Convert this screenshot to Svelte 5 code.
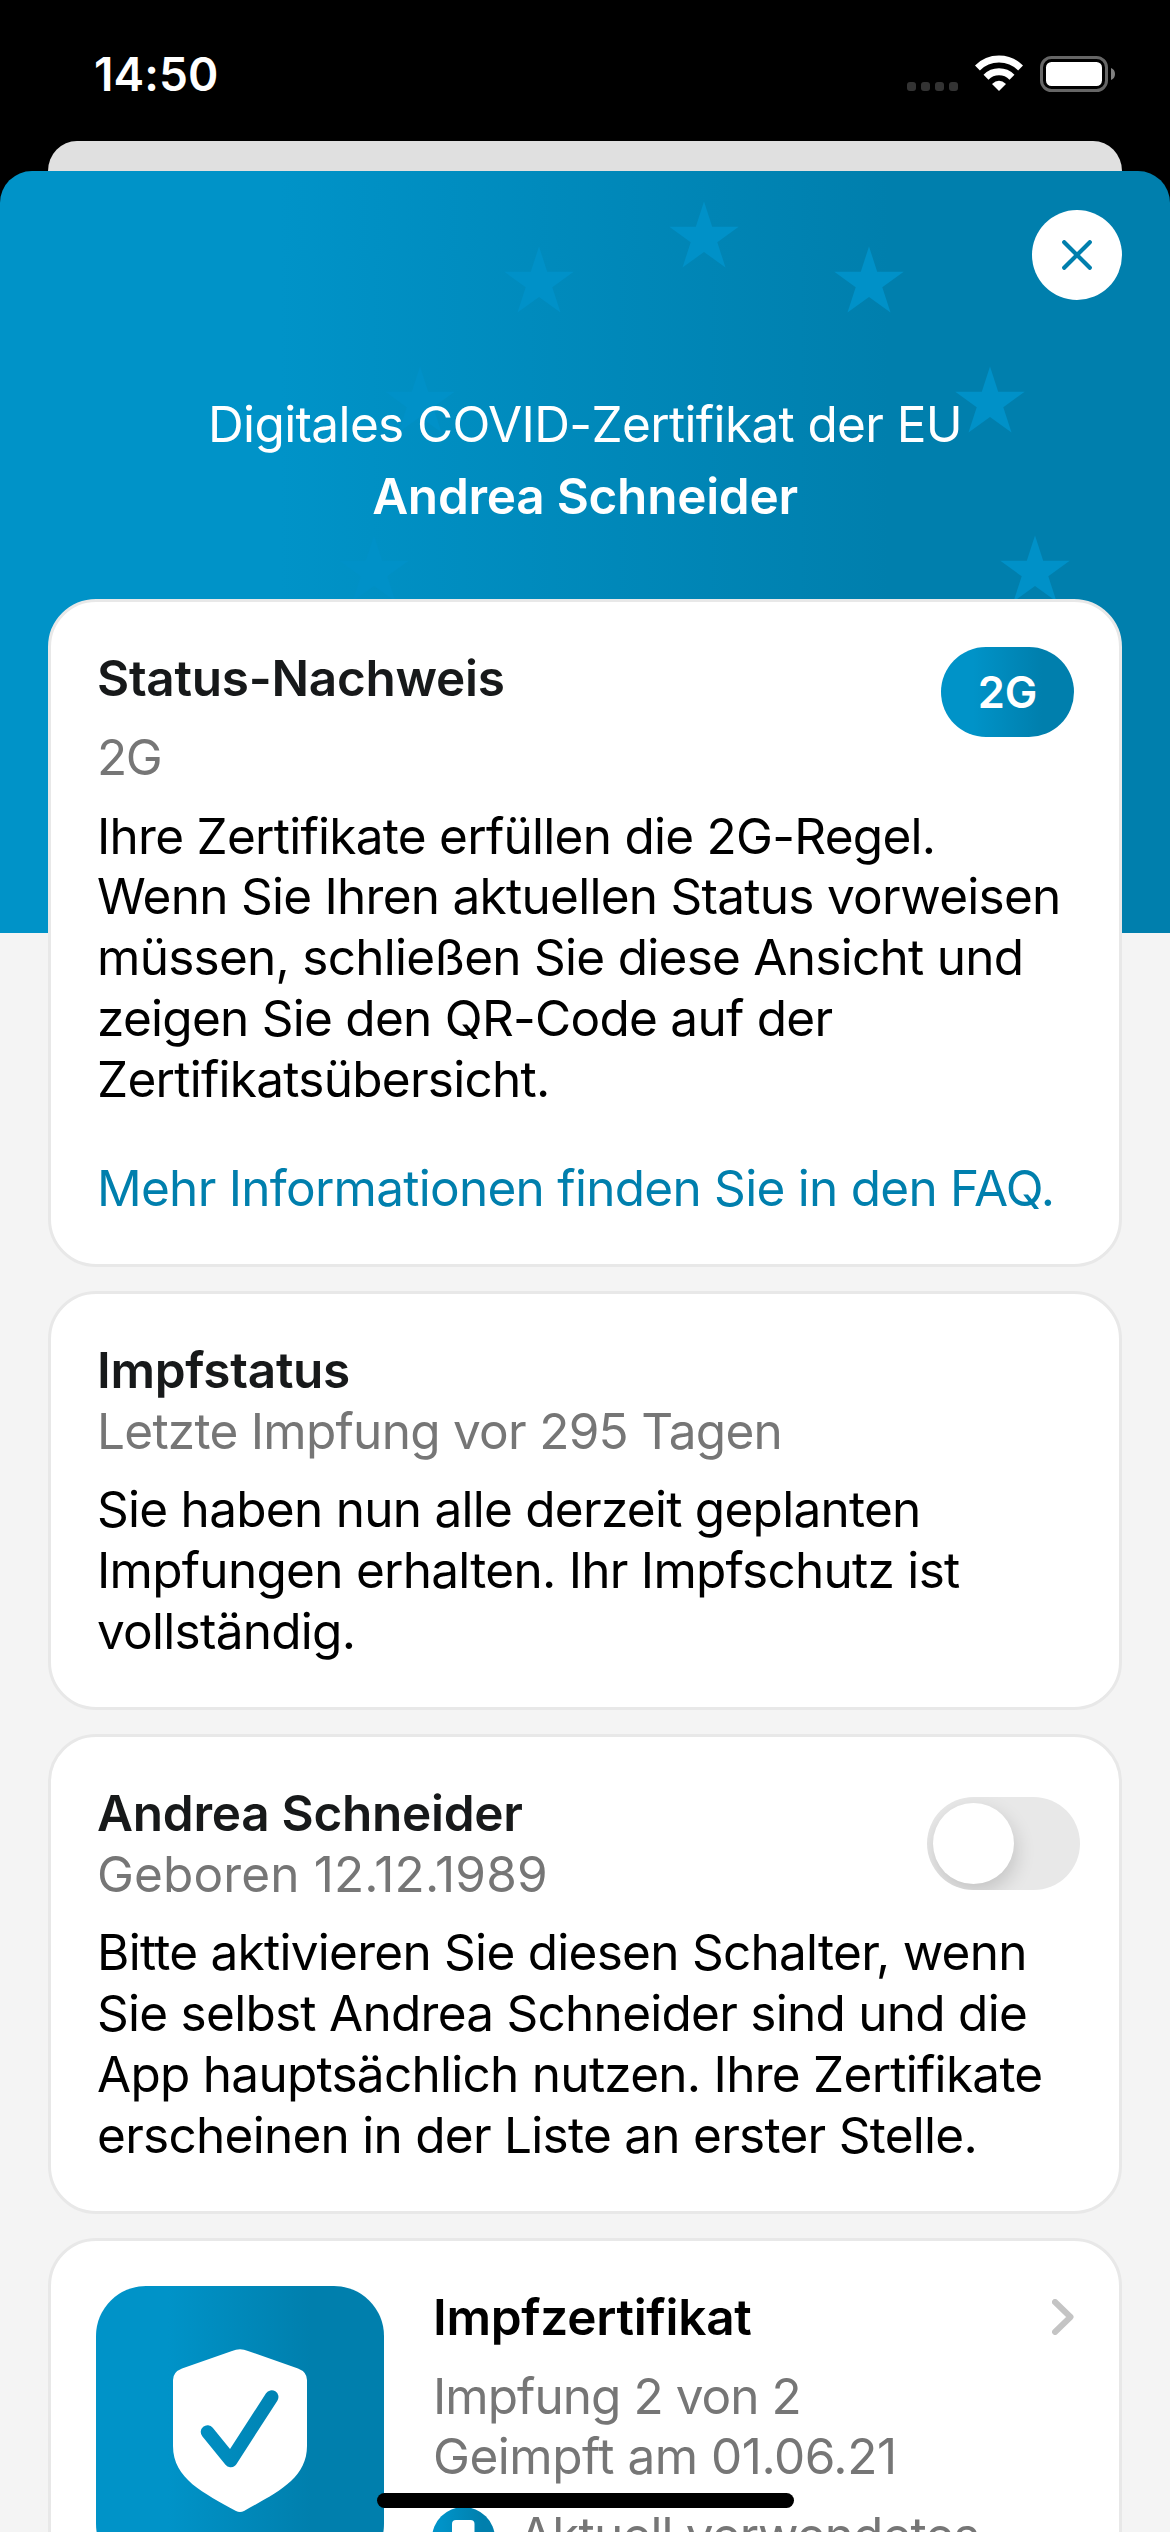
<script>
  // Corner points of a five-pointed star around a centre
  function star(cx, cy, r = 36.5, inner = 14) {
    return Array.from({ length: 10 }, (_, i) => {
      const a = (Math.PI * i) / 5 - Math.PI / 2;
      const d = i % 2 ? inner : r;
      return `${(cx + d * Math.cos(a)).toFixed(1)},${(cy + d * Math.sin(a)).toFixed(1)}`;
    }).join(' ');
  }

  const stars = [
    [704, 67], [539, 112], [869, 112], [420, 232], [990, 232], [374, 401], [1035, 401]
  ];

  const statusLines = [
    'Ihre Zertifikate erfüllen die 2G-Regel.',
    'Wenn Sie Ihren aktuellen Status vorweisen',
    'müssen, schließen Sie diese Ansicht und',
    'zeigen Sie den QR-Code auf der',
    'Zertifikatsübersicht.'
  ];
  const vaccineLines = [
    'Sie haben nun alle derzeit geplanten',
    'Impfungen erhalten. Ihr Impfschutz ist',
    'vollständig.'
  ];
  const personLines = [
    'Bitte aktivieren Sie diesen Schalter, wenn',
    'Sie selbst Andrea Schneider sind und die',
    'App hauptsächlich nutzen. Ihre Zertifikate',
    'erscheinen in der Liste an erster Stelle.'
  ];
</script>

<div class="screen">
  <header class="statusbar">
    <span class="time">14:50</span>
    <div class="indicators">
      <svg class="dots" width="51" height="9" viewBox="0 0 51 9">
        {#each [0, 14, 28, 42] as x}
          <rect {x} width="9" height="9" rx="3" fill="#333" />
        {/each}
      </svg>
      <svg class="wifi" width="48" height="36" viewBox="0 0 48 36">
        <g fill="none" stroke="#fff" stroke-width="7">
          <path d="M2.4 13A30.5 30.5 0 0 1 45.6 13" />
          <path d="M11 22.2A18.4 18.4 0 0 1 37 22.2" />
        </g>
        <path d="M24 36L17 29Q24 22.600 31 29Z" fill="#fff" />
      </svg>
      <svg class="battery" width="75" height="36" viewBox="0 0 75 36">
        <rect x="1.500" y="1.500" width="65" height="33" rx="10" fill="none" stroke="#666" stroke-width="3" />
        <rect x="6" y="6" width="56" height="24" rx="5.500" fill="#fff" />
        <path d="M71 12Q75 13.500 75 18Q75 22.500 71 24Z" fill="#808080" />
      </svg>
    </div>
  </header>

  <div class="behind"></div>

  <main class="sheet">
    <svg class="stars" width="1170" height="761" viewBox="0 0 1170 761">
      {#each stars as [x, y]}
        <polygon points={star(x, y)} fill="#0091c8" />
      {/each}
    </svg>
    <div class="hero">
      <button class="close" aria-label="Schließen">
        <svg width="30" height="30" viewBox="0 0 30 30" fill="none" stroke="#007fad" stroke-width="4.200" stroke-linecap="round">
          <path d="M2.200 2.200L27.800 27.800M27.800 2.200L2.200 27.800" />
        </svg>
      </button>
      <div class="title">Digitales COVID-Zertifikat der EU</div>
      <h1>Andrea Schneider</h1>
    </div>

    <div class="cards">
      <section class="card status">
        <div class="row">
          <h2>Status-Nachweis</h2>
          <span class="badge">2G</span>
        </div>
        <div class="sub">2G</div>
        <div class="body">
          {#each statusLines as line}<div>{line}</div>{/each}
        </div>
        <a class="faq" href="#faq">Mehr Informationen finden Sie in den FAQ.</a>
      </section>

      <section class="card vaccine">
        <h2>Impfstatus</h2>
        <div class="sub">Letzte Impfung vor 295 Tagen</div>
        <div class="body">
          {#each vaccineLines as line}<div>{line}</div>{/each}
        </div>
      </section>

      <section class="card person">
        <div class="row">
          <div>
            <h2>Andrea Schneider</h2>
            <div class="sub born">Geboren 12.12.1989</div>
          </div>
          <button class="switch" role="switch" aria-checked="false" aria-label="Hauptnutzer"><span class="knob"></span></button>
        </div>
        <div class="body">
          {#each personLines as line}<div>{line}</div>{/each}
        </div>
      </section>

      <section class="card cert">
        <div class="tile">
          <svg width="134" height="163" viewBox="0 0 134 163">
            <defs>
              <linearGradient id="check" gradientUnits="userSpaceOnUse" x1="-5" x2="139" y1="0" y2="0">
                <stop stop-color="#0093c8" /><stop offset="1" stop-color="#007fad" />
              </linearGradient>
            </defs>
            <path d="M59 2Q67 -1.500 75 2L125 19.500Q134 23 134 31V97C134 130 103 144 71 162Q67 164 63 162C31 144 0 130 0 97V31Q0 23 9 19.500Z" fill="#fff" />
            <path d="M34.500 83L57.700 111.500L98.700 48" fill="none" stroke="url(#check)" stroke-width="13.500" stroke-linecap="round" stroke-linejoin="round" />
          </svg>
        </div>
        <div class="details">
          <div class="row">
            <h2 class="dark">Impfzertifikat</h2>
            <svg class="chevron" width="22" height="36" viewBox="0 0 22 36" fill="none" stroke="#c4c4c4" stroke-width="6" stroke-linecap="round" stroke-linejoin="round">
              <path d="M3 3L18.500 18L3 33" />
            </svg>
          </div>
          <div class="sub dose">Impfung 2 von 2</div>
          <div class="sub date">Geimpft am 01.06.21</div>
          <div class="current">
            <svg width="63" height="63" viewBox="0 0 63 63">
              <defs>
                <linearGradient id="dot"><stop offset=".15" stop-color="#0093c8" /><stop offset=".8" stop-color="#007fad" /></linearGradient>
              </defs>
              <circle cx="31.500" cy="31.500" r="31.500" fill="url(#dot)" />
              <rect x="20" y="13" width="22.500" height="36" rx="4" fill="#fff" />
            </svg>
            <span class="sub used">Aktuell verwendetes</span>
          </div>
        </div>
      </section>
    </div>
  </main>
  <div class="home"></div>
</div>

<style>
  :global(body) {
    margin: 0;
    background: #000;
  }
  .screen {
    position: relative;
    width: 1170px;
    height: 2532px;
    overflow: hidden;
    display: flex;
    flex-direction: column;
    background: #000;
    font-family: Inter, "Liberation Sans", sans-serif;
    font-size: 49.500px;
    line-height: 60.700px;
    letter-spacing: -.73px;
    color: #000;
    white-space: nowrap;
  }
  .statusbar {
    height: 141px;
    flex: none;
    box-sizing: border-box;
    padding: 44px 55px 0 94px;
    display: flex;
    justify-content: space-between;
    align-items: flex-start;
    color: #fff;
  }
  .time {
    font-size: 46px;
    font-weight: 600;
    letter-spacing: .1px;
  }
  .indicators {
    display: flex;
    align-items: flex-start;
    padding-top: 11px;
  }
  .dots { margin: 27px 17px 0 0; }
  .wifi { margin-right: 17px; }
  .battery { margin-top: 1px; }
  .behind {
    flex: none;
    margin: 0 48px;
    height: 30px;
    background: #e0e0e0;
    border-radius: 29px 29px 0 0 / 30px 30px 0 0;
  }
  .sheet {
    position: relative;
    flex: 1;
    min-height: 0;
    overflow: hidden;
    border-radius: 32px 32px 0 0;
    background: linear-gradient(90deg, #0093c8 24%, #007fad 76%) top / 100% 762px no-repeat, #f4f4f4;
  }
  .stars {
    position: absolute;
    inset: 0;
  }
  .hero {
    position: relative;
    height: 428px;
    box-sizing: border-box;
    padding: 39px 48px 0;
    display: flex;
    flex-direction: column;
    align-items: center;
    color: #fff;
  }
  button {
    border: 0;
    padding: 0;
    flex: none;
  }
  .close {
    align-self: flex-end;
    width: 90px;
    height: 90px;
    border-radius: 50%;
    background: #fff;
    display: flex;
    align-items: center;
    justify-content: center;
  }
  .title {
    margin-top: 94px;
    letter-spacing: -.63px;
  }
  h1, h2 {
    margin: 0;
    font-size: inherit;
    font-weight: 600;
    letter-spacing: -.27px;
  }
  h1 { margin-top: 11px; }
  h2 { color: #17191a; }
  h2.dark { color: #000; }
  .cards {
    position: relative;
    margin: 0 48px;
    display: flex;
    flex-direction: column;
    gap: 24px;
  }
  .card {
    box-sizing: border-box;
    border: 3px solid #e8e8e8;
    border-radius: 48px;
    background: #fff;
    padding: 45px 45px 45px 46px;
  }
  .status { height: 668px; }
  .status h2 { margin-top: 1px; }
  .vaccine { height: 419px; padding-top: 46px; }
  .person { height: 480px; padding-top: 46px; }
  .cert { height: 600px; padding-left: 45px; display: flex; gap: 48px; }
  .row {
    display: flex;
    justify-content: space-between;
  }
  .sub { color: #767676; }
  .body { margin-top: 18px; }
  .badge {
    width: 133px;
    height: 90px;
    border-radius: 45px;
    background: linear-gradient(90deg, #0093c8 24%, #007fad 76%);
    color: #fff;
    font-size: 43.500px;
    font-weight: 600;
    line-height: 90px;
    letter-spacing: 0;
    text-align: center;
  }
  .status .sub { margin-top: -10px; letter-spacing: -1.500px; }
  .faq {
    display: block;
    margin-top: 49px;
    color: #007fad;
    text-decoration: none;
  }
  .born { letter-spacing: .13px; }
  .switch {
    width: 153px;
    height: 93px;
    margin: 14px -6px 0 0;
    border-radius: 47px;
    background: #e8e8e8;
    overflow: hidden;
  }
  .knob {
    display: block;
    width: 81px;
    height: 81px;
    margin-left: 6px;
    border-radius: 50%;
    background: #fff;
    box-shadow: 2px 8px 20px rgba(0, 0, 0, .16);
  }
  .tile {
    flex: none;
    width: 288px;
    height: 288px;
    border-radius: 50px;
    background: linear-gradient(90deg, #0093c8 25%, #007fad 75%);
    display: flex;
    align-items: center;
    justify-content: center;
  }
  .details {
    flex: 1;
    padding-top: 1px;
  }
  .details h2 { margin-left: 1px; }
  .chevron { margin-top: 12px; }
  .dose { margin: 18px 0 0 1px; letter-spacing: -.95px; }
  .date { margin-left: 1px; letter-spacing: -.47px; }
  .current {
    display: flex;
    gap: 24px;
    margin-top: 20px;
  }
  .used {
    margin-top: -2px;
    letter-spacing: -.85px;
  }
  .home {
    position: absolute;
    left: 377px;
    top: 2493px;
    width: 417px;
    height: 15px;
    border-radius: 8px;
    background: #000;
  }
</style>
